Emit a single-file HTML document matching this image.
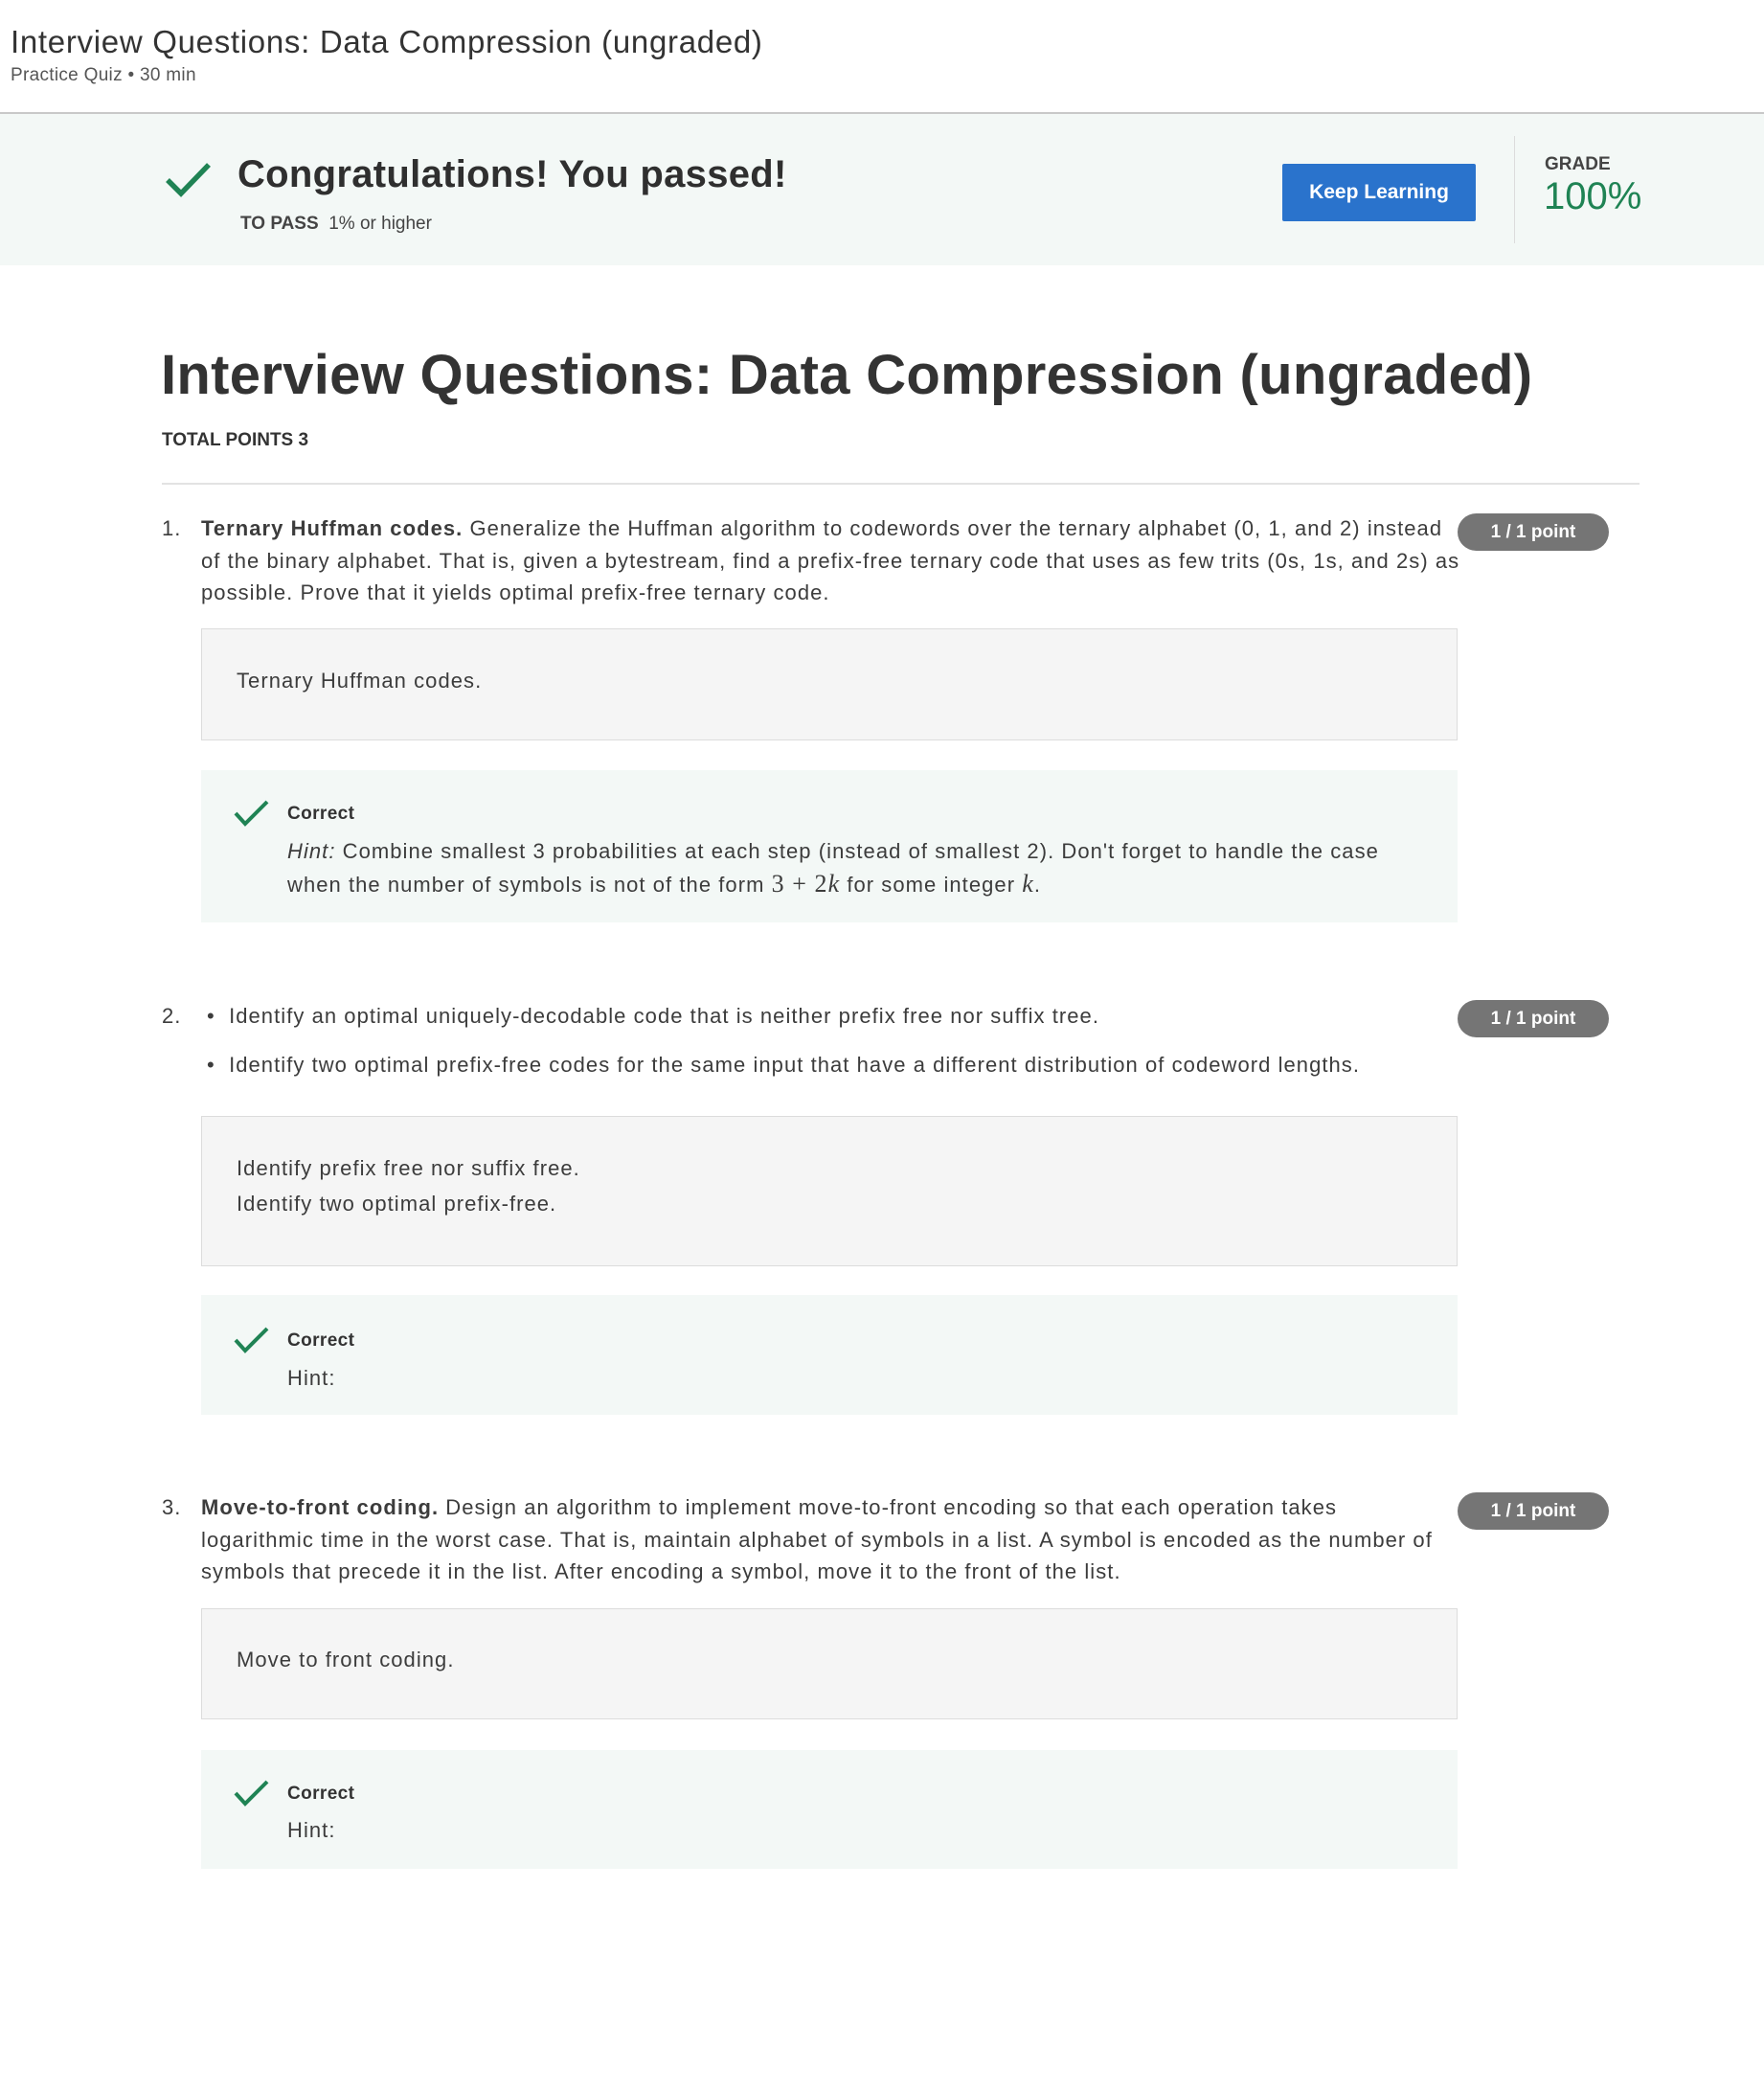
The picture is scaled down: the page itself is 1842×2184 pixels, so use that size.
<!DOCTYPE html>
<html><head><meta charset="utf-8"><style>
*{margin:0;padding:0;box-sizing:border-box}
body{width:1842px;height:2184px;background:#fff;font-family:"Liberation Sans",sans-serif;color:#373a3c;position:relative;overflow:hidden}
.a{position:absolute;white-space:nowrap}
.q{font-size:22px;letter-spacing:1.05px;line-height:33.5px;color:#3c3c3c}
.badge{position:absolute;left:1522px;width:158px;height:39px;border-radius:20px;background:#757575;color:#fff;font-weight:bold;font-size:19px;text-align:center;line-height:39px}
.ans{position:absolute;left:210px;width:1312px;background:#f5f5f5;border:1.5px solid #dcdcdc}
.fb{position:absolute;left:210px;width:1312px;background:#f3f8f6}
.chk{position:absolute}
</style></head><body>
<div class="a" style="left:11px;top:25px;font-size:33px;color:#333;letter-spacing:0.7px">Interview Questions: Data Compression (ungraded)</div>
<div class="a" style="left:11px;top:68px;font-size:19px;color:#555;letter-spacing:0.3px">Practice Quiz • 30 min</div>
<div class="a" style="left:0;top:117px;width:1842px;height:2px;background:#c8c8c8"></div>
<div class="a" style="left:0;top:119px;width:1842px;height:158px;background:#f3f8f6"></div>
<svg class="chk" style="left:172px;top:168px" width="50" height="40" viewBox="0 0 50 40"><path d="M3 20 L17 34 L46 4" fill="none" stroke="#1f8354" stroke-width="5.5"/></svg>
<div class="a" style="left:248px;top:160px;font-size:40px;font-weight:bold;color:#2f2f2f;letter-spacing:0.3px">Congratulations! You passed!</div>
<div class="a" style="left:251px;top:223px;font-size:19px;color:#444"><b>TO PASS</b>&nbsp; 1% or higher</div>
<div class="a" style="left:1339px;top:171px;width:202px;height:60px;background:#2a73cc;border-radius:2px;color:#fff;font-weight:bold;font-size:21px;text-align:center;line-height:60px">Keep Learning</div>
<div class="a" style="left:1581px;top:142px;width:1px;height:112px;background:#dcdcdc"></div>
<div class="a" style="left:1613px;top:161px;font-size:19px;font-weight:bold;color:#444">GRADE</div>
<div class="a" style="left:1612px;top:183px;font-size:40px;color:#1f8354">100%</div>
<div class="a" style="left:168px;top:358px;font-size:58px;font-weight:bold;color:#333;letter-spacing:0.3px">Interview Questions: Data Compression (ungraded)</div>
<div class="a" style="left:169px;top:449px;font-size:19px;font-weight:bold;color:#333">TOTAL POINTS 3</div>
<div class="a" style="left:169px;top:504px;width:1543px;height:2px;background:#e3e3e3"></div>

<div class="a q" style="left:169px;top:535px">1.</div>
<div class="a q" style="left:210px;top:535px"><b>Ternary Huffman codes.</b> Generalize the Huffman algorithm to codewords over the ternary alphabet (0, 1, and 2) instead<br>of the binary alphabet. That is, given a bytestream, find a prefix-free ternary code that uses as few trits (0s, 1s, and 2s) as<br>possible. Prove that it yields optimal prefix-free ternary code.</div>
<div class="badge" style="top:536px">1 / 1 point</div>
<div class="ans" style="top:656px;height:117px"><div class="a q" style="left:36px;top:37px">Ternary Huffman codes.</div></div>
<div class="fb" style="top:804px;height:159px">
<svg class="chk" style="left:34px;top:31px" width="38" height="30" viewBox="0 0 38 30"><path d="M2 14 L12 25 L35 2" fill="none" stroke="#1f8354" stroke-width="4"/></svg>
<div class="a" style="left:90px;top:35px;font-size:19px;font-weight:bold;color:#333;letter-spacing:0.4px">Correct</div>
<div class="a q" style="left:90px;top:68px"><i>Hint:</i> Combine smallest 3 probabilities at each step (instead of smallest 2). Don't forget to handle the case<br>when the number of symbols is not of the form <span style="font-family:'Liberation Serif',serif;font-size:26px">3 + 2<i>k</i></span> for some integer <span style="font-family:'Liberation Serif',serif;font-size:26px"><i>k</i></span>.</div>
</div>

<div class="a q" style="left:169px;top:1044px">2.</div>
<div class="a q" style="left:216px;top:1044px">•&nbsp; Identify an optimal uniquely-decodable code that is neither prefix free nor suffix tree.</div>
<div class="a q" style="left:216px;top:1095px">•&nbsp; Identify two optimal prefix-free codes for the same input that have a different distribution of codeword lengths.</div>
<div class="badge" style="top:1044px">1 / 1 point</div>
<div class="ans" style="top:1165px;height:157px"><div class="a q" style="left:36px;top:37px">Identify prefix free nor suffix free.<br><span style="line-height:40px">Identify two optimal prefix-free.</span></div></div>
<div class="fb" style="top:1352px;height:125px">
<svg class="chk" style="left:34px;top:33px" width="38" height="30" viewBox="0 0 38 30"><path d="M2 14 L12 25 L35 2" fill="none" stroke="#1f8354" stroke-width="4"/></svg>
<div class="a" style="left:90px;top:37px;font-size:19px;font-weight:bold;color:#333;letter-spacing:0.4px">Correct</div>
<div class="a q" style="left:90px;top:70px">Hint:</div>
</div>

<div class="a q" style="left:169px;top:1557px">3.</div>
<div class="a q" style="left:210px;top:1557px"><b>Move-to-front coding.</b> Design an algorithm to implement move-to-front encoding so that each operation takes<br>logarithmic time in the worst case. That is, maintain alphabet of symbols in a list. A symbol is encoded as the number of<br>symbols that precede it in the list. After encoding a symbol, move it to the front of the list.</div>
<div class="badge" style="top:1558px">1 / 1 point</div>
<div class="ans" style="top:1679px;height:116px"><div class="a q" style="left:36px;top:36px">Move to front coding.</div></div>
<div class="fb" style="top:1827px;height:124px">
<svg class="chk" style="left:34px;top:31px" width="38" height="30" viewBox="0 0 38 30"><path d="M2 14 L12 25 L35 2" fill="none" stroke="#1f8354" stroke-width="4"/></svg>
<div class="a" style="left:90px;top:35px;font-size:19px;font-weight:bold;color:#333;letter-spacing:0.4px">Correct</div>
<div class="a q" style="left:90px;top:67px">Hint:</div>
</div>
</body></html>
